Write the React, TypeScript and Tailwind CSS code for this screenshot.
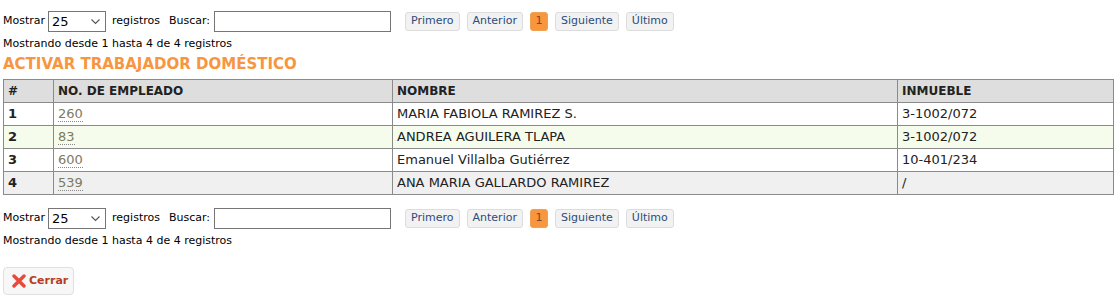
import React from "react";

const font = { fontFamily: '"DejaVu Sans", Verdana, sans-serif' };

function Controls() {
  return (
    <div className="flex flex-col">
      <div className="flex items-center h-[21px] text-[11px] text-black">
        <span className="mr-[3px]">Mostrar</span>
        <div className="relative w-[58px] h-[21px] border border-[#767676] bg-white flex items-center">
          <span className="pl-[3px] text-[13px]">25</span>
          <svg className="absolute right-[5px] top-[7px]" width="9" height="6" viewBox="0 0 9 6">
            <path d="M0.5 0.5 L4.5 4.5 L8.5 0.5" fill="none" stroke="#555" strokeWidth="1.1" />
          </svg>
        </div>
        <span className="ml-[6px]">registros</span>
        <span className="ml-[9px] mr-[4px]">Buscar:</span>
        <div className="w-[177px] h-[21px] border border-[#767676] bg-white" />
        <div className="flex items-center ml-[14px] gap-[7px]">
          {["Primero", "Anterior"].map((t) => (
            <span key={t} className="h-[19px] px-[5px] flex items-center rounded-[3px] border border-[#dcdcdc] bg-[#f2f2f2] text-[#2c4c7a]">{t}</span>
          ))}
          <span className="h-[19px] w-[18px] flex items-center justify-center rounded-[3px] border border-[#f0a050] bg-[#f7963f] text-[#7a4a20]">1</span>
          {["Siguiente", "Último"].map((t) => (
            <span key={t} className="h-[19px] px-[5px] flex items-center rounded-[3px] border border-[#dcdcdc] bg-[#f2f2f2] text-[#2c4c7a]">{t}</span>
          ))}
        </div>
      </div>
      <div className="text-[11px] mt-[4px] leading-[16px]">Mostrando desde 1 hasta 4 de 4 registros</div>
    </div>
  );
}

const rows = [
  { n: "1", e: "260", name: "MARIA FABIOLA RAMIREZ S.", inm: "3-1002/072", bg: "bg-white" },
  { n: "2", e: "83", name: "ANDREA AGUILERA TLAPA", inm: "3-1002/072", bg: "bg-[#f6fcec]" },
  { n: "3", e: "600", name: "Emanuel Villalba Gutiérrez", inm: "10-401/234", bg: "bg-white" },
  { n: "4", e: "539", name: "ANA MARIA GALLARDO RAMIREZ", inm: "/", bg: "bg-[#f0f0f0]" },
];

export default function App() {
  return (
    <div className="w-[1118px] h-[303px] bg-white text-black px-[3px] pt-[11px]" style={font}>
      <Controls />
      <div className="text-[15px] font-bold text-[#f7963f] leading-[18px] mt-[3px]">ACTIVAR TRABAJADOR DOMÉSTICO</div>
      <table className="mt-[6px] w-[1111px] border-collapse text-[13px] text-[#222]">
        <thead>
          <tr className="bg-[#dedede] h-[23px] text-[12px]">
            <th className="w-[50px] border border-[#8a8a8a] text-left font-bold pl-[4px]">#</th>
            <th className="w-[339px] border border-[#8a8a8a] text-left font-bold pl-[4px]">NO. DE EMPLEADO</th>
            <th className="w-[505px] border border-[#8a8a8a] text-left font-bold pl-[4px]">NOMBRE</th>
            <th className="border border-[#8a8a8a] text-left font-bold pl-[4px]">INMUEBLE</th>
          </tr>
        </thead>
        <tbody>
          {rows.map((r) => (
            <tr key={r.n} className={`${r.bg} h-[23px]`}>
              <td className="border border-[#8a8a8a] pl-[4px] font-bold">{r.n}</td>
              <td className="border border-[#8a8a8a] pl-[4px]">
                <span className="text-[#7d7a5e] border-b border-dotted border-[#8a8a8a] leading-[15px] inline-block">{r.e}</span>
              </td>
              <td className="border border-[#8a8a8a] pl-[4px]">{r.name}</td>
              <td className="border border-[#8a8a8a] pl-[4px]">{r.inm}</td>
            </tr>
          ))}
        </tbody>
      </table>
      <div className="mt-[13px]">
        <Controls />
      </div>
      <div className="mt-[18px] w-[71px] h-[28px] rounded-[4px] border border-[#e0e0e0] bg-[#f7f7f7] flex items-center pl-[8px] gap-[3px]">
        <svg width="14" height="14" viewBox="0 0 14 14">
          <path d="M2 2 L12 12 M12 2 L2 12" stroke="#e84a3a" strokeWidth="3.4" strokeLinecap="round" />
        </svg>
        <span className="text-[11px] font-bold text-[#b5401f]">Cerrar</span>
      </div>
    </div>
  );
}
